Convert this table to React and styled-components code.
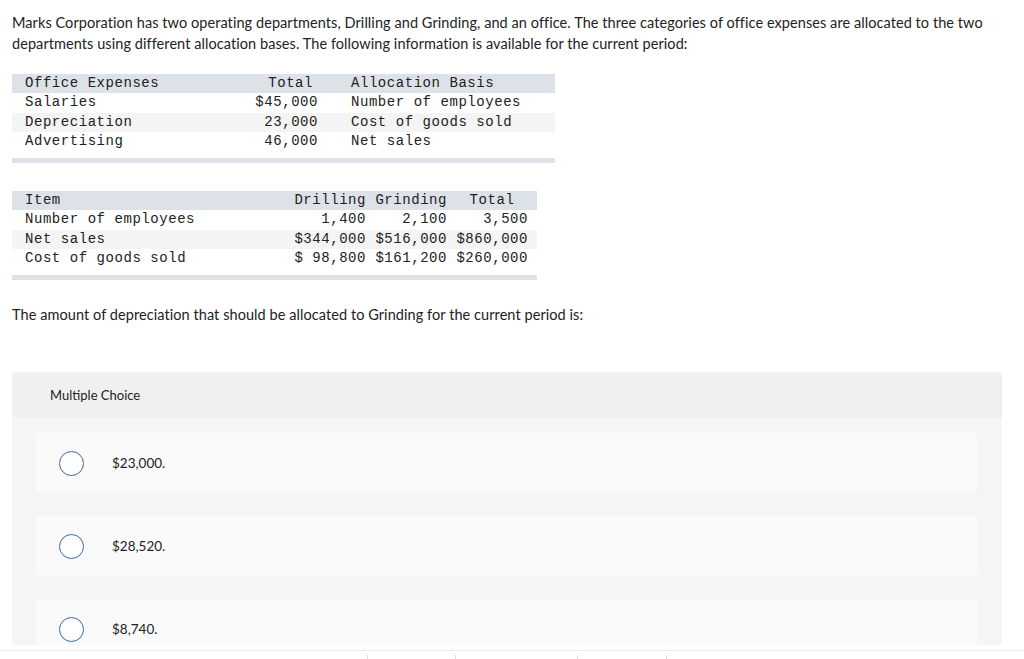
import React from 'react'
import styled, { createGlobalStyle } from 'styled-components'

const GlobalStyle = createGlobalStyle`
  html, body {
    margin: 0;
    padding: 0;
    background: #ffffff;
  }
  body {
    font-family: Lato, "Open Sans", Arial, sans-serif;
    color: #222222;
  }
`

const Page = styled.div`
  padding: 12px 22px 40px 12px;
`

const Prose = styled.p`
  margin: 0;
  font-size: 14.5px;
  letter-spacing: 0.07px;
  line-height: 21px;
  color: #222;
  margin-top: ${(p) => p.top || 0}px;
`

const DataTable = styled.div`
  width: ${(p) => p.width}px;
  margin-top: ${(p) => p.top}px;
  font-family: "Liberation Mono", "Courier New", monospace;
  font-size: 14px;
  letter-spacing: 0.55px;
  color: #222;
  white-space: pre;
`

const Row = styled.div`
  display: grid;
  grid-template-columns: ${(p) => p.cols};
  column-gap: ${(p) => p.gap || 0}px;
  height: 19.25px;
  line-height: 19.25px;
  padding-left: 13px;
  background: ${(p) => (p.head ? '#dde1e8' : p.stripe ? '#f4f4f4' : '#ffffff')};
`

const Cell = styled.span`
  text-align: ${(p) => p.align || 'left'};
  padding-right: ${(p) => p.pr || 0}px;
`

const EndBar = styled.div`
  height: 5px;
  margin-top: 7px;
  background: #dde1e8;
`

const Panel = styled.section`
  margin-top: 47px;
  width: 990px;
  background: #f5f5f5;
  border-radius: 4px 4px 0 0;
  padding-bottom: 24px;
`

const PanelHead = styled.div`
  height: 46px;
  display: flex;
  align-items: center;
  padding-left: 38px;
  background: #f0f0f0;
  border-radius: 4px 4px 0 0;
  font-size: 13px;
  color: #222;
`

const Choices = styled.div`
  display: flex;
  flex-direction: column;
  gap: 23px;
  padding: 15px 25px 0 24px;
`

const Choice = styled.label`
  display: flex;
  align-items: center;
  height: 60px;
  padding-left: 23px;
  background: #fafafa;
  border-radius: 3px;
  font-size: 13.5px;
  color: #222;
`

const Radio = styled.span`
  width: 23px;
  height: 23px;
  border: 1px solid #3b68a1;
  border-radius: 50%;
  background: #fff;
  margin-right: 28px;
  flex: none;
`

const Footer = styled.footer`
  position: fixed;
  left: 0;
  right: 0;
  bottom: 0;
  height: 14px;
  padding-top: 5px;
  box-sizing: border-box;
  background: #fff;
`

const FooterInner = styled.div`
  height: 100%;
  border-top: 1px solid #ebebeb;
  display: flex;
  padding-left: 367px;
`

const FooterTab = styled.div`
  width: ${(p) => p.w}px;
  margin-top: 4px;
  border-left: 1px solid #dcdcdc;
`

const officeRows = [
  ['Salaries', '$45,000', 'Number of employees'],
  ['Depreciation', '23,000', 'Cost of goods sold'],
  ['Advertising', '46,000', 'Net sales'],
]

const itemRows = [
  ['Number of employees', '1,400', '2,100', '3,500'],
  ['Net sales', '$344,000', '$516,000', '$860,000'],
  ['Cost of goods sold', '$ 98,800', '$161,200', '$260,000'],
]

const choices = ['$23,000.', '$28,520.', '$8,740.']

const officeCols = '197px 63px 1fr'
const itemCols = '260px 72px 72px 72px'

export default function App() {
  return (
    <>
      <GlobalStyle />
      <Page>
        <Prose>
          Marks Corporation has two operating departments, Drilling and Grinding, and an office. The three
          categories of office expenses are allocated to the two departments using different allocation bases.
          The following information is available for the current period:
        </Prose>

        <DataTable width={543} top={20}>
          <Row head cols={officeCols} gap={33}>
            <Cell>Office Expenses</Cell>
            <Cell align="right" pr={5}>Total</Cell>
            <Cell>Allocation Basis</Cell>
          </Row>
          {officeRows.map((r, i) => (
            <Row key={r[0]} stripe={i === 1} cols={officeCols} gap={33}>
              <Cell>{r[0]}</Cell>
              <Cell align="right">{r[1]}</Cell>
              <Cell>{r[2]}</Cell>
            </Row>
          ))}
          <EndBar />
        </DataTable>

        <DataTable width={525} top={28}>
          <Row head cols={itemCols} gap={9}>
            <Cell>Item</Cell>
            <Cell align="right">Drilling</Cell>
            <Cell align="right">Grinding</Cell>
            <Cell align="center">Total</Cell>
          </Row>
          {itemRows.map((r, i) => (
            <Row key={r[0]} stripe={i === 1} cols={itemCols} gap={9}>
              <Cell>{r[0]}</Cell>
              <Cell align="right">{r[1]}</Cell>
              <Cell align="right">{r[2]}</Cell>
              <Cell align="right">{r[3]}</Cell>
            </Row>
          ))}
          <EndBar />
        </DataTable>

        <Prose top={24}>The amount of depreciation that should be allocated to Grinding for the current period is:</Prose>

        <Panel>
          <PanelHead>Multiple Choice</PanelHead>
          <Choices>
            {choices.map((c) => (
              <Choice key={c}>
                <Radio />
                {c}
              </Choice>
            ))}
          </Choices>
        </Panel>
      </Page>
      <Footer>
        <FooterInner>
          <FooterTab w={87} />
          <FooterTab w={121} />
          <FooterTab w={88} />
          <FooterTab w={1} />
        </FooterInner>
      </Footer>
    </>
  )
}
